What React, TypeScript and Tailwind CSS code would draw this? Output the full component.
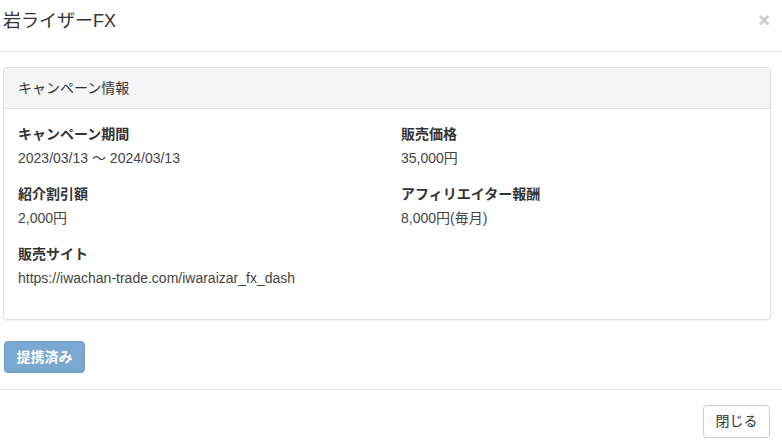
import React from 'react';

const font = { fontFamily: '"Liberation Sans", "Noto Sans CJK JP", sans-serif' };

const Field: React.FC<{ label: string; value: string }> = ({ label, value }) => (
    <div className="mb-[16px]">
        <div className="font-bold text-[14px] leading-[20px] text-[#333]">{label}</div>
        <div className="mt-[4px] text-[14px] leading-[20px] text-[#444]">{value}</div>
    </div>
);

export default function App() {
    return (
        <div className="w-[782px] h-[447px] bg-white overflow-hidden" style={font}>
            <div className="h-[52px] border-b border-[#e5e5e5] flex items-start justify-between pl-[3px] pr-[12px] pt-[8px]">
                <h4 className="text-[18px] leading-[26px] text-[#333]">岩ライザーFX</h4>
                <button className="text-[#c8c8c8] text-[20px] leading-[20px] font-bold mt-[2px]">×</button>
            </div>

            <div className="ml-[3px] mr-[11px] mt-[15px] border border-[#dddddd] rounded-[4px] shadow-[0_1px_1px_rgba(0,0,0,0.05)]">
                <div className="h-[41px] bg-[#f5f5f5] border-b border-[#dddddd] rounded-t-[4px] px-[14px] flex items-center text-[14px] text-[#333]">
                    キャンペーン情報
                </div>
                <div className="pl-[14px] pr-[15px] pt-[15px] pb-[15px] grid grid-cols-[383px_1fr]">
                    <Field label="キャンペーン期間" value="2023/03/13 〜 2024/03/13" />
                    <Field label="販売価格" value="35,000円" />
                    <Field label="紹介割引額" value="2,000円" />
                    <Field label="アフィリエイター報酬" value="8,000円(毎月)" />
                    <Field label="販売サイト" value="https://iwachan-trade.com/iwaraizar_fx_dash" />
                </div>
            </div>

            <div className="pl-[4px] pt-[21px] pb-[16px] border-b border-[#e5e5e5]">
                <button className="w-[81px] h-[32px] rounded-[4px] bg-[#7aa8d0] border border-[#6c9dc9] text-white font-bold text-[14px]">
                    提携済み
                </button>
            </div>

            <div className="flex justify-end pr-[12px] pt-[15px]">
                <button className="w-[67px] h-[33px] rounded-[4px] bg-white border border-[#cccccc] text-[#333] text-[14px]">
                    閉じる
                </button>
            </div>
        </div>
    );
}
